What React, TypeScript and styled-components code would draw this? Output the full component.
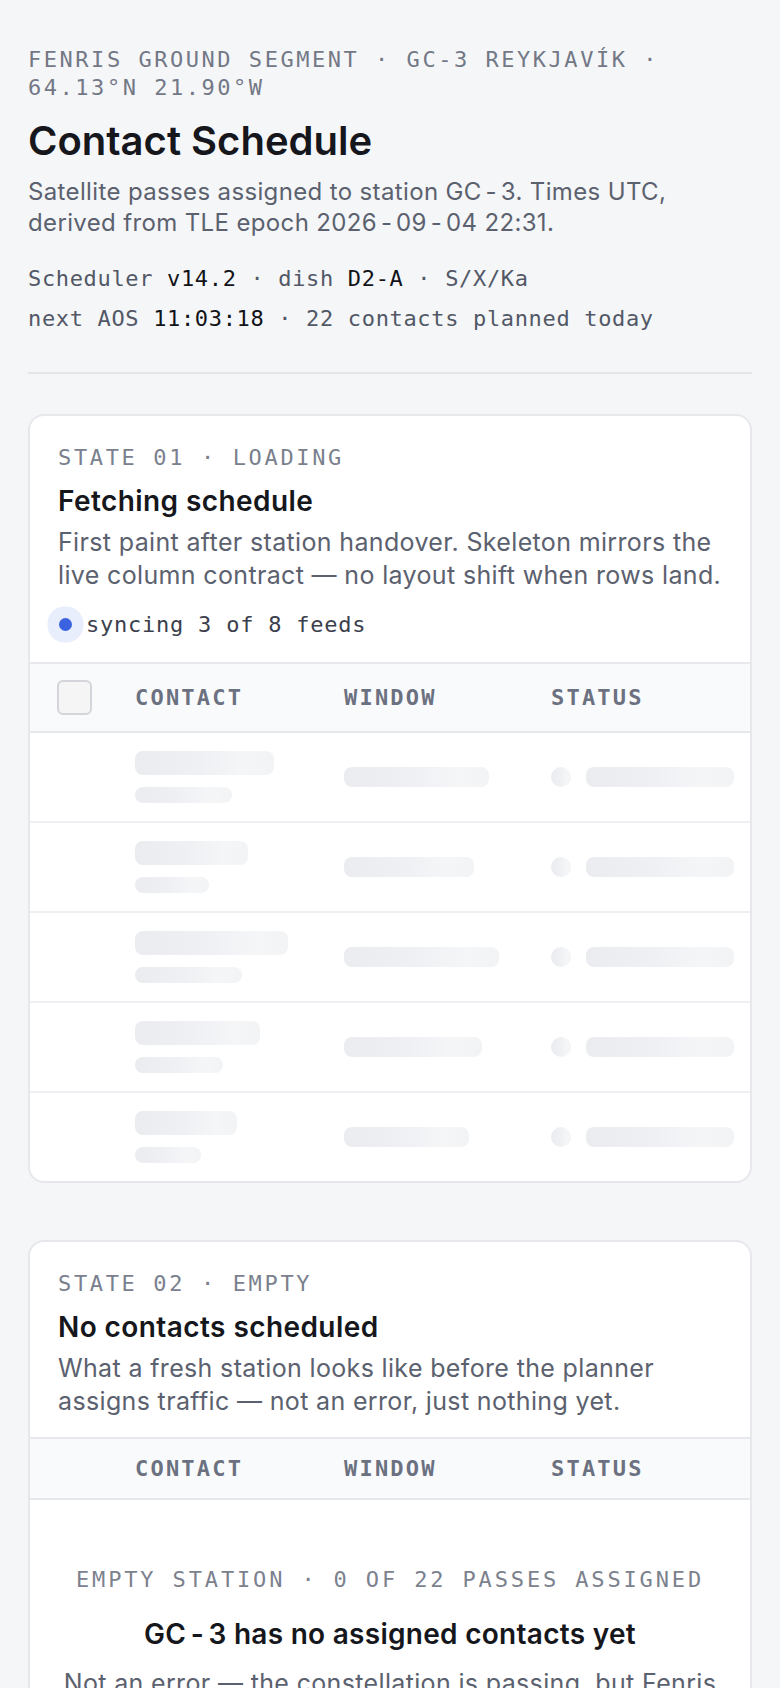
import React from "react";
import styled, { createGlobalStyle } from "styled-components";

const sans = `Inter, "Noto Sans", "Liberation Sans", sans-serif`;
const mono = `"DejaVu Sans Mono", "Liberation Mono", monospace`;

const GlobalStyle = createGlobalStyle`
  html, body { margin: 0; padding: 0; background: #f5f6f8; }
  body {
    font-family: ${sans};
    -webkit-font-smoothing: antialiased;
  }
  *, *::before, *::after { box-sizing: border-box; }
`;

const Page = styled.main`
  padding: 46px 28px 48px;
`;

const Eyebrow = styled.div`
  font-family: ${mono};
  font-size: 22px;
  line-height: 28px;
  letter-spacing: 0.115em;
  color: #737886;
  text-transform: uppercase;
`;

const Title = styled.h1`
  margin: 15px 0 0;
  font-size: 40px;
  line-height: 48px;
  font-weight: 600;
  letter-spacing: 0;
  color: #15171c;
`;

const Lede = styled.p`
  margin: 11px 0 0;
  font-size: 24px;
  line-height: 31.2px;
  letter-spacing: 0.015em;
  color: #5b616e;
`;

const Hyphen = styled.span`
  margin: 0 0.16em;
`;

const MetaList = styled.div`
  margin-top: 21px;
`;

const MetaLine = styled.div`
  font-family: ${mono};
  font-size: 22px;
  line-height: 40px;
  letter-spacing: 0.03em;
  color: #525866;
  white-space: nowrap;
`;

const MetaValue = styled.span`
  color: #111318;
`;

const Divider = styled.hr`
  margin: 33px 0 0;
  border: 0;
  height: 2px;
  background: #e3e5e9;
`;

const Card = styled.section`
  margin-top: 40px;
  background: #ffffff;
  border: 2px solid #e6e8ec;
  border-radius: 16px;
  overflow: hidden;
  & + & {
    margin-top: 57px;
  }
`;

const CardHead = styled.header`
  padding: 28px 28px 20px;
`;

const StateLabel = styled.div`
  font-family: ${mono};
  font-size: 22px;
  line-height: 28px;
  letter-spacing: 0.12em;
  color: #7a808d;
  text-transform: uppercase;
`;

const CardTitle = styled.h2`
  margin: 11px 0 0;
  font-size: 28px;
  line-height: 36px;
  font-weight: 600;
  letter-spacing: 0.015em;
  color: #15171c;
`;

const CardDesc = styled.p`
  margin: 7px 0 0;
  font-size: 25px;
  line-height: 32.5px;
  letter-spacing: 0.014em;
  color: #5b616e;
`;

const SyncRow = styled.div`
  margin-top: 15px;
  height: 36px;
  display: flex;
  align-items: center;
  gap: 14px;
`;

const Pulse = styled.span`
  width: 13px;
  height: 13px;
  margin-left: 1px;
  border-radius: 50%;
  background: #3b63e0;
  box-shadow: 0 0 0 11.5px #e9eefc;
  flex: none;
`;

const SyncText = styled.span`
  font-family: ${mono};
  font-size: 22px;
  letter-spacing: 0.035em;
  color: #3b404c;
`;

const gridCols = `77px 209px 207px 1fr`;

const HeadRow = styled.div`
  display: grid;
  grid-template-columns: ${gridCols};
  align-items: center;
  padding: 16px 16px 16px 28px;
  background: #f9fafc;
  border-top: 2px solid #e6e8ec;
  border-bottom: 2px solid #e6e8ec;
  min-height: 63px;
`;

const HeadCell = styled.div`
  font-family: ${mono};
  font-size: 22px;
  line-height: 27px;
  font-weight: 700;
  letter-spacing: 0.1em;
  color: #6b7180;
  text-transform: uppercase;
`;

const Checkbox = styled.span`
  display: block;
  width: 35px;
  height: 35px;
  margin-left: -1px;
  border: 2px solid #d3d5da;
  border-radius: 6px;
  background: #f5f5f6;
`;

const Row = styled.div`
  display: grid;
  grid-template-columns: ${gridCols};
  align-items: center;
  height: 90px;
  padding: 0 16px 0 28px;
  border-bottom: 2px solid #efeff3;
  &:last-child {
    border-bottom: 0;
    height: 88px;
  }
`;

const Stack = styled.div`
  display: flex;
  flex-direction: column;
  align-items: flex-start;
  gap: 12px;
`;

const Skeleton = styled.span<{ $w?: number; $h: number; $round?: boolean }>`
  display: block;
  width: ${(p) => (p.$w ? `${p.$w}px` : "100%")};
  height: ${(p) => p.$h}px;
  border-radius: ${(p) => (p.$round ? "50%" : "8px")};
  background: linear-gradient(90deg, #ebecf0 0%, #eff0f3 45%, #f5f6f8 80%, #f2f3f5 100%);
  flex: ${(p) => (p.$w ? "none" : "1")};
`;

const StatusCell = styled.div`
  display: flex;
  align-items: center;
  gap: 15px;
`;

const EmptyBody = styled.div`
  padding: 66px 28px 60px;
  text-align: center;
`;

const EmptyLabel = styled.div`
  font-family: ${mono};
  font-size: 22px;
  line-height: 28px;
  letter-spacing: 0.13em;
  color: #7c818e;
  text-transform: uppercase;
`;

const EmptyTitle = styled.h3`
  margin: 22px 0 0;
  font-size: 28px;
  line-height: 36px;
  font-weight: 600;
  letter-spacing: 0.01em;
  color: #15171c;
`;

const EmptyText = styled.p`
  margin: 15px 0 0;
  font-size: 25px;
  line-height: 32.5px;
  letter-spacing: 0.014em;
  color: #5b616e;
`;

const skeletonRows = [
  { primary: 139, secondary: 97, window: 145 },
  { primary: 113, secondary: 74, window: 130 },
  { primary: 153, secondary: 107, window: 155 },
  { primary: 125, secondary: 88, window: 138 },
  { primary: 102, secondary: 66, window: 125 },
];

const H = () => <Hyphen>-</Hyphen>;

export default function App() {
  return (
    <>
      <GlobalStyle />
      <Page>
        <Eyebrow>Fenris Ground Segment · GC-3 Reykjavík · 64.13°N 21.90°W</Eyebrow>
        <Title>Contact Schedule</Title>
        <Lede>
          Satellite passes assigned to station GC<H />3. Times UTC, derived from TLE epoch 2026<H />09<H />04 22:31.
        </Lede>
        <MetaList>
          <MetaLine>
            Scheduler <MetaValue>v14.2</MetaValue> · dish <MetaValue>D2-A</MetaValue> · S/X/Ka
          </MetaLine>
          <MetaLine>
            next AOS <MetaValue>11:03:18</MetaValue> · 22 contacts planned today
          </MetaLine>
        </MetaList>
        <Divider />

        <Card>
          <CardHead>
            <StateLabel>State 01 · Loading</StateLabel>
            <CardTitle>Fetching schedule</CardTitle>
            <CardDesc>
              First paint after station handover. Skeleton mirrors the live column contract — no layout shift when rows land.
            </CardDesc>
            <SyncRow>
              <Pulse />
              <SyncText>syncing 3 of 8 feeds</SyncText>
            </SyncRow>
          </CardHead>
          <HeadRow>
            <div>
              <Checkbox />
            </div>
            <HeadCell>Contact</HeadCell>
            <HeadCell>Window</HeadCell>
            <HeadCell>Status</HeadCell>
          </HeadRow>
          {skeletonRows.map((r, i) => (
            <Row key={i}>
              <div />
              <Stack>
                <Skeleton $w={r.primary} $h={24} />
                <Skeleton $w={r.secondary} $h={16} />
              </Stack>
              <div>
                <Skeleton $w={r.window} $h={20} />
              </div>
              <StatusCell>
                <Skeleton $w={20} $h={20} $round />
                <Skeleton $h={20} />
              </StatusCell>
            </Row>
          ))}
        </Card>

        <Card>
          <CardHead>
            <StateLabel>State 02 · Empty</StateLabel>
            <CardTitle>No contacts scheduled</CardTitle>
            <CardDesc>
              What a fresh station looks like before the planner assigns traffic — not an error, just nothing yet.
            </CardDesc>
          </CardHead>
          <HeadRow>
            <div />
            <HeadCell>Contact</HeadCell>
            <HeadCell>Window</HeadCell>
            <HeadCell>Status</HeadCell>
          </HeadRow>
          <EmptyBody>
            <EmptyLabel>Empty station · 0 of 22 passes assigned</EmptyLabel>
            <EmptyTitle>GC<H />3 has no assigned contacts yet</EmptyTitle>
            <EmptyText>
              Not an error — the constellation is passing, but Fenris has not routed any windows to this dish. Passes appear here once the planner assigns them.
            </EmptyText>
          </EmptyBody>
        </Card>
      </Page>
    </>
  );
}
